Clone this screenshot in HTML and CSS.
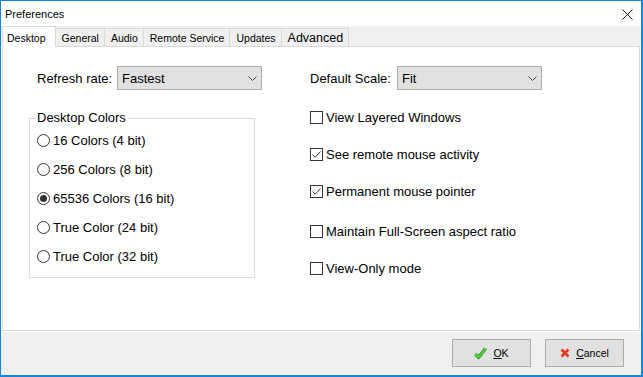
FILE: index.html
```html
<!DOCTYPE html>
<html lang="en">
<head>
  <meta charset="UTF-8" />
  <title>Preferences</title>
  <link rel="stylesheet" href="styles.css">
</head>
<body>
  <div class="window">
    <div class="titlebar">
      <span class="title">Preferences</span>
      <svg class="close" width="11" height="11" viewBox="0 0 11 11">
        <path d="M0.5 0.5 L10.5 10.5 M10.5 0.5 L0.5 10.5" stroke="#111" stroke-width="1" fill="none"/>
      </svg>
    </div>

    <!-- tab strip -->
    <div class="tabs">
      <div class="tab active">Desktop</div>
      <div class="tab">General</div>
      <div class="tab">Audio</div>
      <div class="tab">Remote Service</div>
      <div class="tab">Updates</div>
      <div class="tab big">Advanced</div>
    </div>

    <div class="panel">
      <div class="col col-left">
        <div class="field">
          <span class="label label-refresh">Refresh rate:</span>
          <div class="combo">
            <span>Fastest</span>
            <svg width="9" height="5" viewBox="0 0 9 5"><path d="M0.5 0.5 L4.5 4.5 L8.5 0.5" stroke="#444" fill="none"/></svg>
          </div>
        </div>

        <fieldset class="group">
          <legend>Desktop Colors</legend>
          <div class="radio"><span class="ring"></span>16 Colors (4 bit)</div>
          <div class="radio"><span class="ring"></span>256 Colors (8 bit)</div>
          <div class="radio"><span class="ring on"></span>65536 Colors (16 bit)</div>
          <div class="radio"><span class="ring"></span>True Color (24 bit)</div>
          <div class="radio"><span class="ring"></span>True Color (32 bit)</div>
        </fieldset>
      </div>

      <div class="col col-right">
        <div class="field">
          <span class="label label-scale">Default Scale:</span>
          <div class="combo">
            <span>Fit</span>
            <svg width="9" height="5" viewBox="0 0 9 5"><path d="M0.5 0.5 L4.5 4.5 L8.5 0.5" stroke="#444" fill="none"/></svg>
          </div>
        </div>

        <div class="checks">
          <div class="check"><span class="box"></span>View Layered Windows</div>
          <div class="check"><span class="box"><svg width="11" height="11" viewBox="0 0 11 11"><path d="M1.5 5.5 L4.2 8.2 L9.5 2.5" stroke="#333" fill="none"/></svg></span>See remote mouse activity</div>
          <div class="check"><span class="box"><svg width="11" height="11" viewBox="0 0 11 11"><path d="M1.5 5.5 L4.2 8.2 L9.5 2.5" stroke="#333" fill="none"/></svg></span>Permanent mouse pointer</div>
          <div class="check spaced"><span class="box"></span>Maintain Full-Screen aspect ratio</div>
          <div class="check"><span class="box"></span>View-Only mode</div>
        </div>
      </div>
    </div>

    <div class="footer">
      <button class="btn">
        <svg width="13" height="13" viewBox="0 0 13 13">
          <path d="M1.5 7 L4.5 10.5 L11.5 1.5" stroke="#2f8f22" stroke-width="3.4" fill="none" stroke-linejoin="round"/>
          <path d="M1.5 7 L4.5 10.5 L11.5 1.5" stroke="#4fd13a" stroke-width="2" fill="none" stroke-linejoin="round"/>
        </svg>
        <span><u>O</u>K</span>
      </button>
      <button class="btn">
        <svg width="10" height="10" viewBox="0 0 10 10">
          <path d="M1.5 1.5 L8.5 8.5 M8.5 1.5 L1.5 8.5" stroke="#e8351b" stroke-width="2.6" fill="none"/>
        </svg>
        <span><u>C</u>ancel</span>
      </button>
    </div>
  </div>
</body>
</html>
```

FILE: styles.css
```css
body {
  margin: 0;
  font-family: "Liberation Sans", Arial, sans-serif;
  color: #000;
}
.window {
  width: 643px;
  height: 377px;
  box-sizing: border-box;
  border: 1px solid #1883d7;
  border-right-width: 2px;
  border-bottom-width: 2px;
  background: white;
  display: flex;
  flex-direction: column;
}
.titlebar {
  height: 25px;
  display: flex;
  justify-content: space-between;
  align-items: center;
  padding: 0 8px 0 4px;
  font-size: 11px;
}
.close {
  margin-top: 1px;
}

/* tabs */
.tabs {
  height: 20px;
  background: #f0f0f0;
  display: flex;
  align-items: flex-end;
  padding-left: 1px;
  font-size: 10.5px;
}
.tab {
  height: 18px;
  box-sizing: border-box;
  padding: 0 5px 0 6px;
  border: 1px solid #d9d9d9;
  border-bottom: none;
  margin-left: -1px;
  display: flex;
  align-items: center;
  background: #f0f0f0;
}
.tab.active {
  height: 21px;
  margin-left: 0;
  margin-bottom: -1px;
  padding: 1px 9px 0 4px;
  background: white;
  position: relative;
  z-index: 1;
}
.tab.big {
  font-size: 12.5px;
}

.panel {
  height: 285px;
  box-sizing: border-box;
  margin: 0 1px;
  border: 1px solid #d9d9d9;
  background: white;
  padding: 19px 0 0 26px;
  display: flex;
  gap: 55px;
  font-size: 13px;
}
.col-left {
  width: 226px;
  flex-shrink: 0;
}
.field {
  display: flex;
  align-items: center;
  height: 24px;
}
.field > * {
  flex-shrink: 0;
}
.col-left .field {
  padding-left: 8px;
}
.label-refresh {
  width: 80px;
}
.label-scale {
  width: 87px;
}
.combo {
  width: 145px;
  height: 24px;
  box-sizing: border-box;
  border: 1px solid #adadad;
  background: #e1e1e1;
  display: flex;
  align-items: center;
  justify-content: space-between;
  padding: 0 4px 0 4px;
}

.group {
  width: 226px;
  box-sizing: border-box;
  margin: 20px 0 0 0;
  padding: 0 0 6px 6px;
  border: 1px solid #dcdcdc;
}
.group legend {
  padding: 0 1px;
  line-height: 16px;
}
.radio {
  height: 29px;
  display: flex;
  align-items: center;
  padding-left: 1px;
}
.ring {
  width: 13px;
  height: 13px;
  box-sizing: border-box;
  border: 1px solid #333;
  border-radius: 50%;
  margin-right: 3px;
  position: relative;
}
.ring.on::after {
  content: "";
  position: absolute;
  inset: 2px;
  border-radius: 50%;
  background: #333;
}

.checks {
  margin-top: 9px;
}
.check {
  height: 37px;
  display: flex;
  align-items: center;
}
.check.spaced {
  margin-top: 3px;
}
.box {
  width: 13px;
  height: 13px;
  box-sizing: border-box;
  border: 1px solid #333;
  margin-right: 3px;
  display: flex;
  align-items: center;
  justify-content: center;
}

.footer {
  height: 44px;
  box-sizing: border-box;
  border-top: 1px solid white;
  background: #f0f0f0;
  display: flex;
  justify-content: flex-end;
  align-items: flex-start;
  gap: 14px;
  padding: 7px 17px 0 0;
}
.btn {
  width: 79px;
  height: 28px;
  border: 1px solid #adadad;
  background: #e1e1e1;
  display: flex;
  align-items: center;
  justify-content: center;
  gap: 6px;
  font-family: "Liberation Sans", Arial, sans-serif;
  font-size: 10.5px;
  color: #000;
  padding: 0;
}
```
